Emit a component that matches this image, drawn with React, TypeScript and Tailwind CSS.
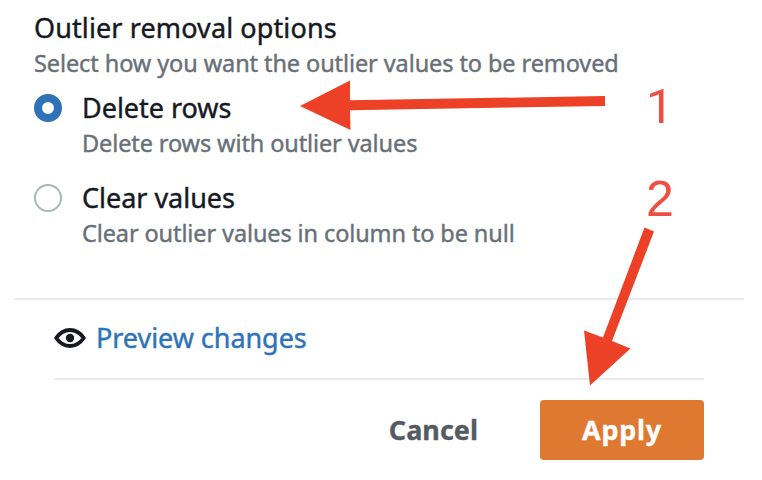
type OptionProps = {
  title: string;
  description: string;
  checked?: boolean;
};

function RadioOption({ title, description, checked }: OptionProps) {
  return (
    <label className="flex h-[70px] gap-5">
      <span
        className={
          checked
            ? "mt-1.5 h-7 w-7 shrink-0 rounded-full border-[8px] border-[#2e73b8] bg-white"
            : "mt-1.5 h-7 w-7 shrink-0 rounded-full border-2 border-[#aab7b8] bg-white"
        }
      />
      <span className="flex flex-col whitespace-nowrap">
        <span className="text-[27px] leading-10 tracking-[-0.03px] text-[#16191f] [-webkit-text-stroke:0.4px]">
          {title}
        </span>
        <span className="text-[23.5px] leading-[30px] tracking-[-0.11px] text-[#687078] [-webkit-text-stroke:0.4px]">
          {description}
        </span>
      </span>
    </label>
  );
}

function EyeIcon() {
  return (
    <svg width="32" height="20" viewBox="0 0 32 20" fill="none">
      <path
        d="M2.2 10C6 4.600 10.500 2 16 2s10 2.600 13.800 8c-3.800 5.400-8.300 8-13.800 8S6 15.400 2.200 10Z"
        stroke="#16191f"
        strokeWidth="3.900"
        strokeLinejoin="round"
      />
      <circle cx="16" cy="10" r="4.2" fill="#16191f" />
    </svg>
  );
}

export default function App() {
  return (
    <main className="relative h-[480px] w-[762px] overflow-hidden bg-white pt-2 font-['Noto_Sans',sans-serif]">
      <section className="flex h-[290px] flex-col pl-[34px] whitespace-nowrap">
        <h2 className="text-[27px] leading-10 tracking-[0.11px] text-[#16191f] [-webkit-text-stroke:0.4px]">
          Outlier removal options
        </h2>
        <p className="text-[23.5px] leading-[30px] tracking-[-0.09px] text-[#687078] [-webkit-text-stroke:0.4px]">
          Select how you want the outlier values to be removed
        </p>
        <div className="mt-2.5 flex flex-col gap-5">
          <RadioOption title="Delete rows" description="Delete rows with outlier values" checked />
          <RadioOption title="Clear values" description="Clear outlier values in column to be null" />
        </div>
      </section>

      <footer className="ml-3.5 w-[730px] border-t-2 border-[#eaeaea] px-10">
        <div className="flex h-[78px] items-center pb-0.5">
          <button className="flex items-center gap-2.5 text-[27px] leading-10 tracking-[-0.05px] whitespace-nowrap text-[#2e73b8] [-webkit-text-stroke:0.4px]">
            <EyeIcon />
            <span>Preview changes</span>
          </button>
        </div>
        <div className="flex justify-end gap-[62px] border-t-2 border-[#eaeaea] pt-5 text-[27px] leading-10 font-bold">
          <button className="text-[#545b64] [-webkit-text-stroke:0.3px]">Cancel</button>
          <button className="h-[60px] w-[164px] rounded bg-[#df7932] tracking-[0.7px] text-white [-webkit-text-stroke:0.3px]">
            Apply
          </button>
        </div>
      </footer>

      <svg className="absolute inset-0" width="762" height="480" fill="#ec4127">
        <path d="M300 106 350 80.5V100.3L605 96v10L350 110.2 350.5 130Z" />
        <path d="M644.5 227.5 654 231.5 612 341 630.5 348.5 590 385.5 584 330.5 603 337.5Z" />
      </svg>
      <span className="absolute top-[79px] left-[646px] font-['Roboto',sans-serif] text-[49px] leading-[56px] text-[#f04e40]">
        1
      </span>
      <span className="absolute top-[171px] left-[646px] font-['Liberation_Sans',sans-serif] text-[50px] leading-[56px] text-[#f04e40]">
        2
      </span>
    </main>
  );
}
